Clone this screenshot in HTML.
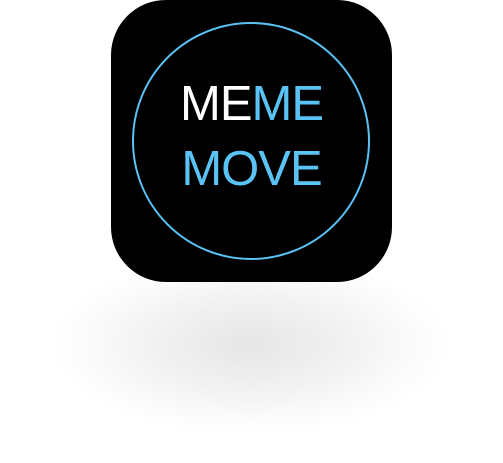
<!DOCTYPE html>
<html><head><style>
html,body{margin:0;padding:0;background:#fff;width:503px;height:463px;overflow:hidden;position:relative}
.sh{position:absolute;left:50px;top:255px;width:400px;height:180px;background:radial-gradient(ellipse closest-side,#e6e6e6 0%,#efefef 40%,#f9f9f9 75%,#fff 100%)}
.box{position:absolute;left:111px;top:0;width:281px;height:282px;background:#000;border-radius:55px}
.c{position:absolute;left:132px;top:22px;width:238px;height:238px;border:2px solid #5ac3f5;border-radius:50%;box-sizing:border-box}
.t{position:absolute;left:111px;width:281px;text-align:center;font-family:"Liberation Sans",sans-serif;font-size:49px;line-height:49px;letter-spacing:-1px;color:#5ac3f5}
</style></head><body>
<div class="sh"></div>
<div class="box"></div>
<div class="c"></div>
<div class="t" style="top:80px"><span style="color:#fff">ME</span>ME</div>
<div class="t" style="top:145px">MOVE</div>
</body></html>
